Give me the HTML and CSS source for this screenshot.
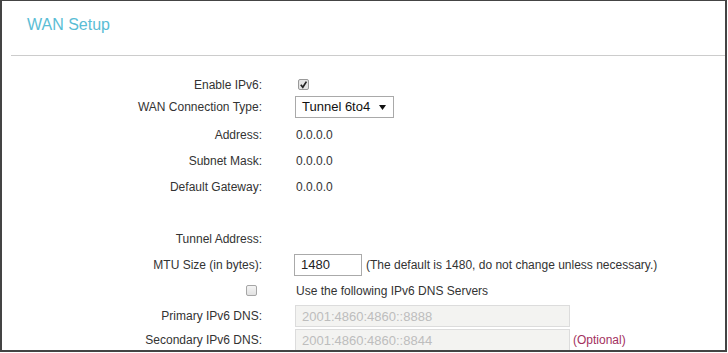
FILE: index.html
```html
<!DOCTYPE html>
<html lang="en">
<head>
    <meta charset="UTF-8">
    <title>WAN Setup</title>
    <meta name="viewport" content="width=device-width, initial-scale=1.0">
    <link rel="stylesheet" href="styles.css">
</head>
<body>

<div class="panel">
    <div class="panel-head">
        <h2 class="panel-title">WAN Setup</h2>
    </div>

    <div class="form">
        <div class="row row-enable">
            <div class="label">Enable IPv6:</div>
            <div class="value">
                <span class="check is-checked">
                    <svg width="9" height="9" viewBox="0 0 9 9"><path d="M1.8 4.8 L3.8 7.2 L7.4 1.6" fill="none" stroke="#222" stroke-width="1.7"/></svg>
                </span>
            </div>
        </div>
        <div class="row row-type">
            <div class="label">WAN Connection Type:</div>
            <div class="value">
                <div class="select">
                    <span>Tunnel 6to4</span>
                    <svg width="7" height="5" viewBox="0 0 7 5"><path d="M0 0 H7 L3.5 5 Z" fill="#111"/></svg>
                </div>
            </div>
        </div>
        <div class="row">
            <div class="label">Address:</div>
            <div class="value text">0.0.0.0</div>
        </div>
        <div class="row">
            <div class="label">Subnet Mask:</div>
            <div class="value text">0.0.0.0</div>
        </div>
        <div class="row">
            <div class="label">Default Gateway:</div>
            <div class="value text">0.0.0.0</div>
        </div>
        <div class="row"></div>
        <div class="row">
            <div class="label">Tunnel Address:</div>
            <div class="value text"></div>
        </div>
        <div class="row row-mtu">
            <div class="label">MTU Size (in bytes):</div>
            <div class="value">
                <input class="field field-mtu" type="text" value="1480">
                <span class="hint">(The default is 1480, do not change unless necessary.)</span>
            </div>
        </div>
        <div class="row row-dns-toggle">
            <div class="label"><span class="check"></span></div>
            <div class="value text">Use the following IPv6 DNS Servers</div>
        </div>
        <div class="row row-dns">
            <div class="label">Primary IPv6 DNS:</div>
            <div class="value">
                <input class="field field-dns" type="text" value="2001:4860:4860::8888" disabled>
            </div>
        </div>
        <div class="row row-dns">
            <div class="label">Secondary IPv6 DNS:</div>
            <div class="value">
                <input class="field field-dns" type="text" value="2001:4860:4860::8844" disabled>
                <span class="optional">(Optional)</span>
            </div>
        </div>
    </div>
</div>

</body>
</html>
```

FILE: styles.css
```css
body {
    margin: 0;
    padding: 0;
    background: #fff;
    font-family: 'Liberation Sans', Arial, sans-serif;
    color: #333;
}

.panel {
    width: 727px;
    height: 352px;
    box-sizing: border-box;
    border: 2px solid #444;
    border-top-width: 1px;
    overflow: hidden;
}

.panel-head {
    height: 54px;
    margin-left: 9px;
    border-bottom: 1px solid #ccc;
}

.panel-title {
    margin: 0;
    padding: 15px 0 0 16px;
    font-size: 16px;
    font-weight: normal;
    line-height: 18px;
    color: #5abdd5;
}

.form {
    margin-top: 17px;
}

.row {
    display: grid;
    grid-template-columns: 260px 1fr;
    column-gap: 32px;
    align-items: center;
    height: 26px;
    font-size: 12px;
    line-height: 14px;
}

.row-enable {
    height: 23px;
}

.row-type {
    height: 22px;
    margin-bottom: 4px;
}

.row-mtu {
    height: 25px;
}

.row-dns-toggle {
    height: 27px;
}

.row-dns {
    height: 24px;
}

.label {
    text-align: right;
    display: flex;
    justify-content: flex-end;
    align-items: center;
}

.value {
    display: flex;
    align-items: center;
}

.value.text {
    padding-left: 2px;
}

.check {
    display: inline-flex;
    align-items: center;
    justify-content: center;
    width: 11px;
    height: 11px;
    box-sizing: border-box;
    border: 1px solid #a6a6a6;
    border-radius: 2px;
    background: linear-gradient(#f4f4f4, #e2e2e2);
    margin-right: 5px;
}

.check.is-checked {
    margin: 0 0 0 4px;
    background: #e4e4e4;
    border-color: #9a9a9a;
}

.select {
    display: flex;
    align-items: center;
    justify-content: space-between;
    width: 99px;
    height: 22px;
    box-sizing: border-box;
    border: 1px solid #a9a9a9;
    padding: 0 7px 0 6px;
    font-size: 13px;
    color: #111;
    margin-left: 1px;
}

.field {
    height: 22px;
    box-sizing: border-box;
    border: 1px solid #aaa;
    padding: 0 0 0 6px;
    font-family: 'Liberation Sans', Arial, sans-serif;
    font-size: 13px;
    color: #222;
    background: #fff;
    outline: none;
    margin: 0;
}

.field-mtu {
    width: 68px;
}

.hint {
    margin-left: 4px;
    color: #333;
}

.field-dns {
    width: 275px;
    margin-left: 1px;
    border-color: #dcdcdc;
    background: #f3f3f1;
    color: #bdbdbd;
}

.optional {
    margin-left: 3px;
    color: #a3305e;
}
```
